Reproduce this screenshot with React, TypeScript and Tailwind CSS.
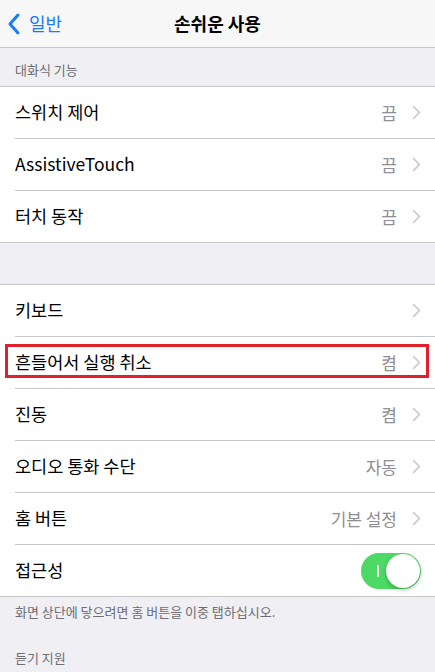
import React from 'react'

const font = { fontFamily: '"Noto Sans CJK KR", "Noto Sans", sans-serif' }

function Chevron() {
  return (
    <svg width="9" height="15" viewBox="0 0 9 15" className="ml-[15px] shrink-0">
      <path d="M1.5 1.5 L7.5 7.5 L1.5 13.5" fill="none" stroke="#c7c7cc" strokeWidth="1.6" strokeLinecap="round" strokeLinejoin="round" />
    </svg>
  )
}

function Toggle() {
  return (
    <div className="relative w-[60px] h-[36px] rounded-full bg-[#4cd964] shrink-0">
      <div className="absolute left-[16px] top-[12px] w-[2px] h-[12px] bg-white/90 rounded" />
      <div className="absolute right-[1px] top-[1px] w-[34px] h-[34px] rounded-full bg-white shadow-[0_2px_4px_rgba(0,0,0,0.25)]" />
    </div>
  )
}

type Row = { label: string; value?: string; chevron?: boolean; toggle?: boolean; highlight?: boolean }

function Group({ rows }: { rows: Row[] }) {
  return (
    <div className="bg-white border-y border-[#c8c7cc]">
      {rows.map((r, i) => (
        <div key={r.label} className="relative pl-[15px]">
          <div className={`h-[51px] box-content flex items-center pr-[14px] ${i < rows.length - 1 ? 'border-b border-[#c8c7cc]' : ''}`}>
            <span className="flex-1 text-[17.5px] text-black">{r.label}</span>
            {r.value && <span className="text-[17px] text-[#8e8e93]">{r.value}</span>}
            {r.chevron && <Chevron />}
            {r.toggle && <Toggle />}
          </div>
          {r.highlight && (
            <div className="absolute left-[5px] right-[6px] top-[7px] h-[34px] border-[3px] border-[#e0202a]" />
          )}
        </div>
      ))}
    </div>
  )
}

export default function App() {
  return (
    <div className="w-[435px] h-[672px] overflow-hidden bg-[#efeff4]" style={font}>
      <div className="h-[48px] bg-[#f7f7f8] border-b border-[#c8c7cc] relative flex items-center justify-center">
        <div className="absolute left-[7px] top-0 h-full flex items-center text-[#1a7cf5]">
          <svg width="14" height="24" viewBox="0 0 14 24">
            <path d="M11 3 L3 12 L11 21" fill="none" stroke="#1a7cf5" strokeWidth="3" strokeLinecap="round" strokeLinejoin="round" />
          </svg>
          <span className="ml-[8px] text-[18px]">일반</span>
        </div>
        <span className="text-[18px] font-semibold text-black">손쉬운 사용</span>
      </div>

      <div className="h-[38px] flex items-end pl-[15px] pb-[7px] text-[13px] text-[#6d6d72]">대화식 기능</div>

      <Group
        rows={[
          { label: '스위치 제어', value: '끔', chevron: true },
          { label: 'AssistiveTouch', value: '끔', chevron: true },
          { label: '터치 동작', value: '끔', chevron: true },
        ]}
      />

      <div className="h-[41px]" />

      <Group
        rows={[
          { label: '키보드', chevron: true },
          { label: '흔들어서 실행 취소', value: '켬', chevron: true, highlight: true },
          { label: '진동', value: '켬', chevron: true },
          { label: '오디오 통화 수단', value: '자동', chevron: true },
          { label: '홈 버튼', value: '기본 설정', chevron: true },
          { label: '접근성', toggle: true },
        ]}
      />

      <div className="pl-[15px] pt-[5px] text-[13px] text-[#6d6d72]">화면 상단에 닿으려면 홈 버튼을 이중 탭하십시오.</div>
      <div className="pl-[15px] pt-[26px] text-[13px] text-[#6d6d72]">듣기 지원</div>
    </div>
  )
}
